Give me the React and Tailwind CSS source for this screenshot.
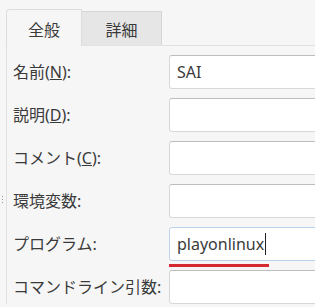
const rows = [
  { label: <>名前(<u>N</u>):</>, value: 'SAI' },
  { label: <>説明(<u>D</u>):</>, value: '' },
  { label: <>コメント(<u>C</u>):</>, value: '' },
  { label: <>環境変数:</>, value: '' },
  { label: <>プログラム:</>, value: 'playonlinux', focus: true },
  { label: <>コマンドライン引数:</>, value: '' },
]

export default function App() {
  return (
    <div
      className="relative w-[315px] h-[307px] overflow-hidden bg-[#f6f6f6] text-[#3a3a3a] text-[16px]"
      style={{ fontFamily: '"Noto Sans", "Noto Sans CJK JP", sans-serif' }}
    >
      {/* splitter handle */}
      <div className="absolute left-[2px] top-[196px] flex flex-col gap-[2px]">
        <div className="w-px h-px bg-[#9a9a9a]" />
        <div className="w-px h-px bg-[#9a9a9a]" />
        <div className="w-px h-px bg-[#9a9a9a]" />
      </div>

      <div className="flex items-start pl-[6px] pt-[9px] h-[46px]">
        <div className="relative z-10 w-[76px] h-[37px] pt-[3px] bg-[#f6f6f6] border border-b-0 border-[#dcdcdc] rounded-tl-[4px] flex items-center justify-center">
          全般
        </div>
        <div className="mt-[2px] w-[80px] h-[34px] pt-[2px] bg-[#e6e6e6] border-t border-r border-[#d6d6d6] flex items-center justify-center">
          詳細
        </div>
      </div>

      <div className="ml-[6px] -mt-px border-l border-t border-[#e2e2e2] pt-[9px] pl-[6px] flex flex-col gap-[9px]">
        {rows.map((r, i) => (
          <div key={i} className="flex items-center">
            <div className="w-[156px] shrink-0 whitespace-nowrap">{r.label}</div>
            <div className="relative w-[160px] shrink-0">
              <div
                className={`h-[34px] bg-white rounded-[3px] border ${
                  r.focus ? 'border-[#bcd3ec]' : 'border-[#d8d8d8] border-t-[#bdbdbd]'
                } flex items-center pl-[7px]`}
              >
                {r.value}
                {r.focus && <span className="ml-px w-px h-[22px] bg-[#222]" />}
              </div>
              {r.focus && (
                <div className="absolute left-0 top-[37px] w-[100px] h-[3px] bg-[#d42a32]" />
              )}
            </div>
          </div>
        ))}
      </div>
    </div>
  )
}
